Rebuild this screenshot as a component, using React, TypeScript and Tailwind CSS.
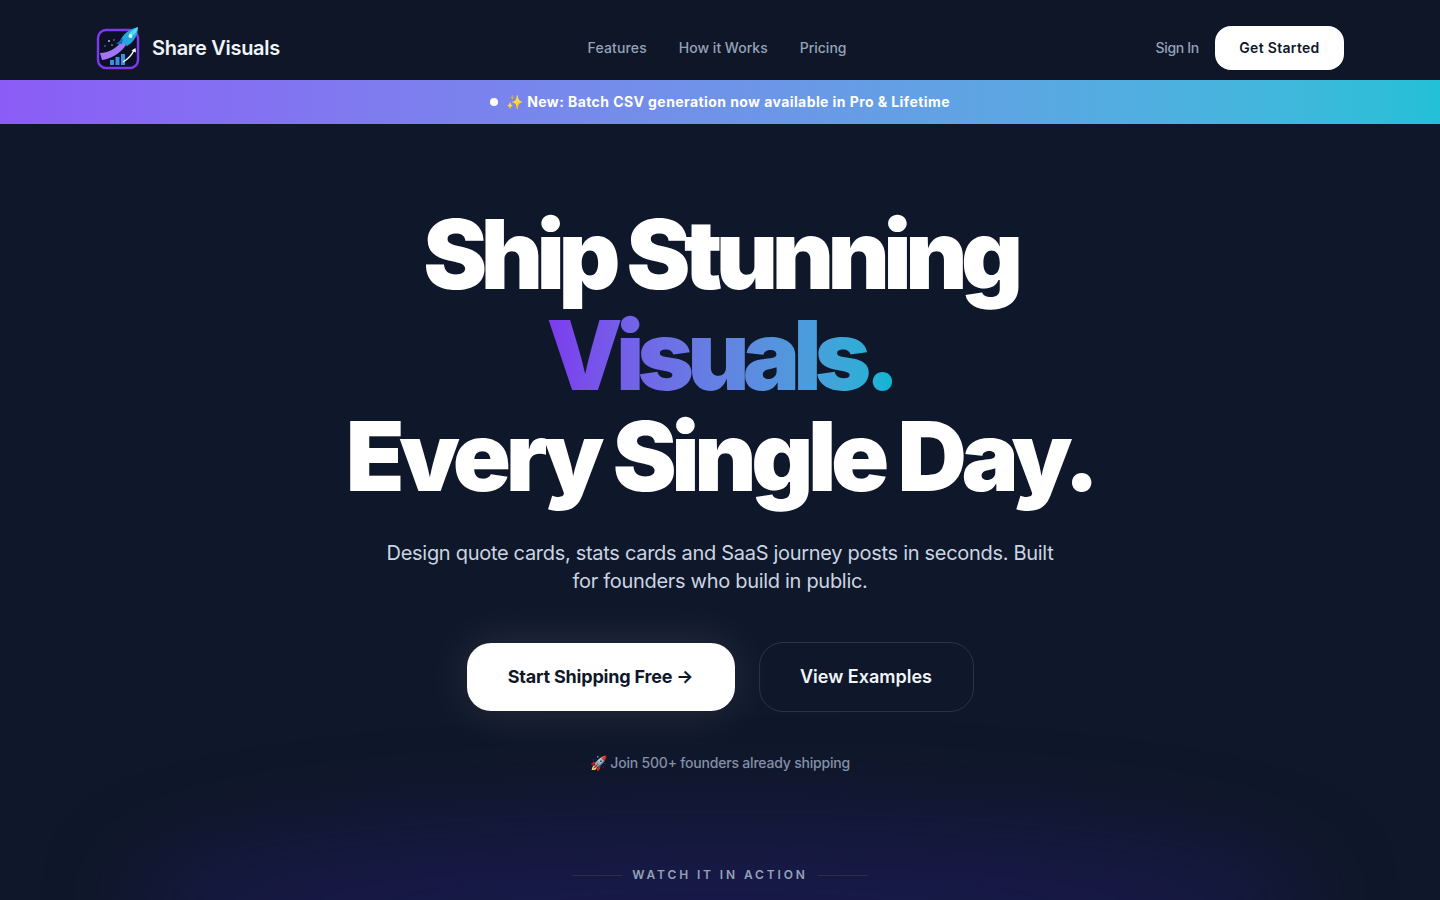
const sans = "font-['Inter','Noto_Sans',sans-serif]";

function Logo() {
  return (
    <svg width="44" height="44" viewBox="0 0 44 44" fill="none">
      <defs>
        <linearGradient id="frame" x1="1" y1="3" x2="43" y2="43">
          <stop offset="0" stopColor="#7c3aed" />
          <stop offset="1" stopColor="#2b8fd8" />
        </linearGradient>
        <linearGradient id="trail" x1="5" y1="36" x2="28" y2="16">
          <stop offset="0" stopColor="#8b3fe8" />
          <stop offset="0.6" stopColor="#b06cf5" />
          <stop offset="1" stopColor="#38bdf8" />
        </linearGradient>
      </defs>
      <rect x="2" y="4" width="40" height="38" rx="8" fill="#0b1024" stroke="url(#frame)" strokeWidth="2.4" />
      <path d="M4 27C12 27 20 23 26 15L30 19C24 28 14 33 6 34Z" fill="url(#trail)" />
      <path d="M24 15C27 8 33 3 42 1C42 9 38 16 31 20Z" fill="#22a8dc" />
      <path d="M33 8C35 5 38 3 42 1C41.5 4 40 7 38 9Z" fill="#57d8ef" />
      <circle cx="34.5" cy="10" r="2" fill="#dff6ff" />
      <path d="M20 18L27 12L26 18Z" fill="#1769c4" />
      <path d="M14 39V34H18V39ZM19.5 39V31H23.5V39ZM25 39V28H29V39Z" fill="#3b8fe0" />
      <path d="M27 36C32 33 36 29 38 24" stroke="#f4f7ff" strokeWidth="1.4" />
      <path d="M35.5 24.5L39.5 22L40 26.5Z" fill="#f4f7ff" />
      <circle cx="13" cy="15" r="0.9" fill="#cbd5e1" />
      <circle cx="18" cy="14" r="0.7" fill="#94a3b8" />
      <circle cx="9" cy="20" r="0.7" fill="#94a3b8" />
      <circle cx="16" cy="19" r="0.7" fill="#cbd5e1" />
    </svg>
  );
}

export default function App() {
  return (
    <div className={`relative h-[900px] overflow-hidden bg-[#0f172a] ${sans}`}>
      <div className="pointer-events-none absolute inset-x-[130px] bottom-[-90px] h-[170px] rounded-[50%] bg-[#1e1b5c]/60 blur-[45px]" />

      <header className="relative flex h-20 items-center justify-between bg-[#0e1628] px-24 pt-4">
        <div className="flex w-[294px] items-center gap-3">
          <Logo />
          <span className="text-xl font-semibold tracking-[-0.015em] text-[#f1f5f9]">Share Visuals</span>
        </div>
        <nav className="flex gap-8 text-sm font-medium text-[#94a3b8]">
          <a className="tracking-[0.15px]">Features</a>
          <a>How it Works</a>
          <a>Pricing</a>
        </nav>
        <div className="flex w-[300px] items-center justify-end gap-4">
          <a className="text-sm font-medium tracking-[-0.3px] text-[#94a3b8]">Sign In</a>
          <button className="h-11 w-[129px] rounded-2xl bg-white text-sm font-semibold tracking-[0.3px] text-[#0f172a]">
            Get Started
          </button>
        </div>
      </header>

      <div className="relative flex h-11 items-center justify-center gap-2 bg-gradient-to-r from-[#8b5cf6] to-[#22c0d8] text-sm font-bold tracking-[0.42px] text-white">
        <span className="h-2 w-2 rounded-full bg-white" />
        <span>✨ New: Batch CSV generation now available in Pro &amp; Lifetime</span>
      </div>

      <main className="relative flex flex-col items-center pt-20">
        <h1 className="text-center text-8xl leading-[101px] font-black text-white">
          <span className="tracking-[-6.5px]">Ship Stunning</span>
          <br />
          <span className="bg-gradient-to-r from-[#7c3aed] to-[#06b6d4] bg-clip-text tracking-[-6.8px] text-transparent">
            Visuals.
          </span>
          <br />
          <span className="tracking-[-5.4px]">Every Single Day.</span>
        </h1>
        <p className="mt-8 max-w-[680px] text-center text-xl leading-7 font-normal tracking-[-0.3px] text-[#cbd5e1]">
          Design quote cards, stats cards and SaaS journey posts in seconds. Built for founders who build in public.
        </p>
        <div className="mt-[47px] flex items-center gap-6">
          <button className="h-[68px] w-[268px] rounded-3xl bg-white text-lg font-bold tracking-[-0.2px] text-[#0f172a] shadow-[0_0_50px_rgba(255,255,255,0.1)]">
            Start Shipping Free →
          </button>
          <button className="h-[70px] w-[215px] rounded-3xl border border-[#2a3347] text-lg font-semibold text-[#f1f5f9]">
            View Examples
          </button>
        </div>
        <p className="mt-[41px] text-sm font-medium tracking-[-0.2px] text-[#8390a6]">
          🚀 Join 500+ founders already shipping
        </p>
        <div className="mt-[94px] flex items-center gap-[10px] text-xs font-semibold tracking-[0.24em] text-[#94a3b8]">
          <span className="h-px w-[50px] bg-[#2a3145]" />
          WATCH IT IN ACTION
          <span className="h-px w-[50px] bg-[#2a3145]" />
        </div>
      </main>
    </div>
  );
}
